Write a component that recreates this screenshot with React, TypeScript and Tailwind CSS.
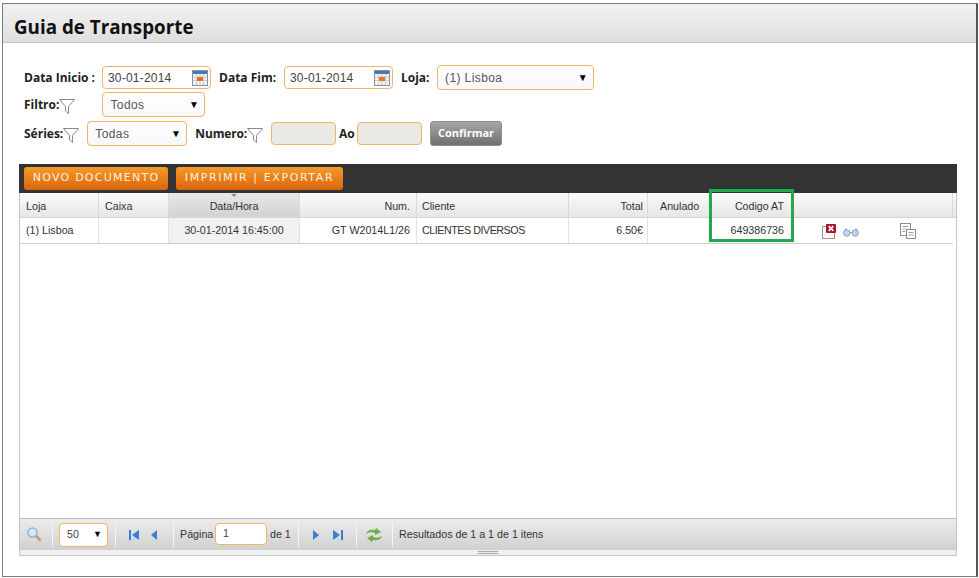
import React from "react";

const labelCls = "font-['Open_Sans',sans-serif] font-bold text-[12px] text-[#222] leading-none";
const fieldCls = "border border-[#eeb564] rounded-[4px] bg-white font-['Liberation_Sans',sans-serif] text-[12px] text-[#444]";

function Funnel({ className = "" }: { className?: string }) {
  return (
    <svg width="16" height="17" viewBox="0 0 16 17" className={className}>
      <path d="M0.5 1.5H15.5L9.5 8.5V15.5L6.5 13V8.5Z" fill="#fff" stroke="#8a8a8a" strokeWidth="1" />
    </svg>
  );
}

function Calendar() {
  return (
    <svg width="16" height="16" viewBox="0 0 16 16">
      <rect x="0.5" y="0.5" width="15" height="15" fill="#f2f2ee" stroke="#7f94a8" />
      <rect x="1" y="1" width="14" height="3" fill="#4a78ad" />
      <path d="M1 7H15M1 10.500H15M4.500 4V15M8 4V15M11.500 4V15" stroke="#c9cfd4" strokeWidth="1" />
      <rect x="5" y="7" width="6" height="4" fill="#e07b1a" />
    </svg>
  );
}

function Select({ text, widthCls, heightCls }: { text: string; widthCls: string; heightCls: string }) {
  return (
    <div className={`${fieldCls} ${widthCls} ${heightCls} flex items-center justify-between pl-[7px] pr-[5px] bg-gradient-to-b from-white to-[#f8f8fa] tracking-[0.4px]`}>
      <span className="text-[#555]">{text}</span>
      <span className="text-[10px] text-black leading-none">▼</span>
    </div>
  );
}

function DateInput({ value }: { value: string }) {
  return (
    <div className={`${fieldCls} w-[109px] h-[23px] flex items-center justify-between pl-[5px] pr-[2px]`}>
      <span className="tracking-[0.2px]">{value}</span>
      <Calendar />
    </div>
  );
}

function OrangeButton({ text, cls }: { text: string; cls: string }) {
  return (
    <div className={`${cls} h-[23px] rounded-[3px] bg-gradient-to-b from-[#f59a2a] to-[#d9640a] flex items-center justify-center font-['DejaVu_Sans',sans-serif] text-[11px] text-[#fff0da]`}>
      {text}
    </div>
  );
}

const columns = [
  { title: "Loja", cell: "(1) Lisboa", w: "w-[79px]", align: "text-left pl-[6px]", cellCls: "" },
  { title: "Caixa", cell: "", w: "w-[70px]", align: "text-left pl-[6px]", cellCls: "" },
  { title: "Data/Hora", cell: "30-01-2014 16:45:00", w: "w-[131px]", align: "text-center", sorted: true, cellCls: "" },
  { title: "Num.", cell: "GT W2014L1/26", w: "w-[117px]", align: "text-right pr-[6px]", cellCls: "" },
  { title: "Cliente", cell: "CLIENTES DIVERSOS", w: "w-[152px]", align: "text-left pl-[5px]", cellCls: "tracking-[-0.45px]" },
  { title: "Total", cell: "6.50€", w: "w-[79px]", align: "text-right pr-[4px]", cellCls: "" },
  { title: "Anulado", cell: "", w: "w-[63px]", align: "text-left pl-[12px]", cellCls: "" },
  { title: "Codigo AT", cell: "649386736", w: "w-[82px]", align: "text-right pr-[8px]", cellCls: "" },
];

function RowIcons() {
  return (
    <div className="flex-1 flex items-center pl-[29px] h-full">
      <svg width="15" height="15" viewBox="0 0 15 15" className="mt-[1px]">
        <rect x="0.500" y="2.500" width="12" height="12" fill="none" stroke="#5f1a1a" strokeWidth="1" strokeDasharray="1 1" />
        <rect x="4" y="0" width="10" height="9" rx="1" fill="#a8122a" />
        <path d="M6.700 2.200L11.300 6.800M11.300 2.200L6.700 6.800" stroke="#fff" strokeWidth="1.800" />
      </svg>
      <svg width="16" height="10" viewBox="0 0 16 10" className="ml-[6px] mt-[2px]">
        <circle cx="3.800" cy="6" r="3.200" fill="#c3d7ea" stroke="#7fa3c7" />
        <circle cx="12.200" cy="6" r="3.200" fill="#c3d7ea" stroke="#7fa3c7" />
        <path d="M7 5.500H9M1.500 3.500L3.500 1M14.500 3.500L12.500 1" stroke="#7fa3c7" fill="none" />
      </svg>
      <svg width="16" height="16" viewBox="0 0 16 16" className="ml-[41px] mt-[1px]">
        <rect x="0.500" y="0.500" width="10" height="12" fill="#fff" stroke="#8c8c8c" />
        <rect x="6.500" y="6.500" width="9" height="9" fill="#fff" stroke="#8c8c8c" />
        <path d="M2.500 3.500H8.500M2.500 6H5.500M2.500 8.500H5.500M8.500 9.500H13.500M8.500 12H13.500" stroke="#a0a0a0" />
      </svg>
    </div>
  );
}

function Sep() {
  return <div className="w-[1px] h-[24px] bg-[#f4f4f4] shrink-0" />;
}

export default function App() {
  return (
    <div className="w-[979px] h-[578px] bg-white pt-[3px] pl-[2px] pr-[1px] pb-[1px] overflow-hidden">
      <div className="relative h-full border border-[#7d7d7d] border-r-2 border-r-[#555]">
        <header className="h-[39px] bg-gradient-to-b from-[#f2f2f2] to-[#dfdfdf] border-b border-[#c8c8c8] pl-[11px] flex items-center">
          <h1 className="font-['Open_Sans',sans-serif] font-bold text-[18.8px] text-[#111] leading-none mt-[8px]">Guia de Transporte</h1>
        </header>

        <section className="pl-[21px] pt-[22px]">
          <div className="flex items-center h-[25px]">
            <span className={`${labelCls} w-[78px]`}>Data Inicio :</span>
            <DateInput value="30-01-2014" />
            <span className={`${labelCls} ml-[8px] w-[65px]`}>Data Fim:</span>
            <DateInput value="30-01-2014" />
            <span className={`${labelCls} ml-[8px] w-[36px]`}>Loja:</span>
            <Select text="(1) Lisboa" widthCls="w-[157px]" heightCls="h-[25px]" />
          </div>
          <div className="flex items-center h-[25px] mt-[2px]">
            <span className={labelCls}>Filtro:</span>
            <Funnel className="mt-[3px]" />
            <div className="ml-[27px]">
              <Select text="Todos" widthCls="w-[103px]" heightCls="h-[25px]" />
            </div>
          </div>
          <div className="flex items-center h-[25px] mt-[4px]">
            <span className={labelCls}>Séries:</span>
            <Funnel className="mt-[3px]" />
            <div className="ml-[8px]">
              <Select text="Todas" widthCls="w-[100px]" heightCls="h-[25px]" />
            </div>
            <span className={`${labelCls} ml-[8px] tracking-[-0.15px]`}>Numero:</span>
            <Funnel className="mt-[3px]" />
            <div className={`${fieldCls} ml-[8px] w-[65px] h-[23px] !bg-[#ebe9e3]`} />
            <span className={`${labelCls} ml-[3px] w-[18px]`}>Ao</span>
            <div className={`${fieldCls} w-[65px] h-[23px] !bg-[#ebe9e3]`} />
            <div className="ml-[8px] w-[72px] h-[25px] rounded-[3px] border border-[#8d8d8d] bg-gradient-to-b from-[#a6a6a6] to-[#6f6f6f] flex items-center justify-center font-['Open_Sans',sans-serif] font-bold text-[11px] text-white">
              Confirmar
            </div>
          </div>
        </section>

        <section className="relative mt-[18px] ml-[16px] w-[938px] h-[392px] border-x border-b border-[#c6c6c6] flex flex-col font-['Liberation_Sans',sans-serif] text-[10.7px] text-[#333]">
          <div className="h-[29px] bg-[#333333] flex items-end gap-[8px] pl-[5px] pb-[3px] shrink-0 -mx-[1px]">
            <OrangeButton text="NOVO DOCUMENTO" cls="w-[144px] tracking-[1.25px]" />
            <OrangeButton text="IMPRIMIR | EXPORTAR" cls="w-[167px] tracking-[1.6px]" />
          </div>

          <div className="flex h-[25px] shrink-0 bg-gradient-to-b from-[#fbfbfb] to-[#e6e6e6] border-b border-[#d4d4d4]">
            {columns.map((c) => (
              <div
                key={c.title}
                className={`${c.w} ${c.align} relative leading-[26px] border-r border-[#dadada] ${c.sorted ? "bg-gradient-to-b from-[#e8e8e8] to-[#d2d2d2]" : ""}`}
              >
                {c.sorted && (
                  <span className="absolute left-1/2 -translate-x-1/2 top-[1px] w-0 h-0 border-x-[3px] border-x-transparent border-t-[3px] border-t-[#888]" />
                )}
                {c.title}
              </div>
            ))}
            <div className="flex-1 mr-[3px] border-r border-[#dadada]" />
          </div>

          <div className="flex h-[26px] shrink-0 mr-[3px] border-b border-[#cfcfcf]">
            {columns.map((c) => (
              <div
                key={c.title}
                className={`${c.w} ${c.align} ${c.cellCls} leading-[25px] border-r border-[#e2e2e2] ${c.sorted ? "bg-[#f1f1f1]" : ""}`}
              >
                {c.cell}
              </div>
            ))}
            <RowIcons />
          </div>

          <div className="flex-1" />

          <div className="h-[32px] shrink-0 bg-gradient-to-b from-[#ececec] to-[#d0d0d0] border-t border-[#bdbdbd] flex items-center pl-[6px] text-[#333]">
            <svg width="16" height="16" viewBox="0 0 16 16" className="mb-[2px]">
              <circle cx="6.500" cy="6.500" r="4.500" fill="#d5e6f5" stroke="#8fb6d8" strokeWidth="1.500" />
              <path d="M10 10L14.500 14.500" stroke="#c49a5a" strokeWidth="2.500" />
            </svg>
            <div className="w-[10px] shrink-0" />
            <Sep />
            <div className="ml-[6px]">
              <div className={`${fieldCls} w-[49px] h-[24px] flex items-center justify-between pl-[7px] pr-[5px]`}>
                <span className="text-[10.7px]">50</span>
                <span className="text-[9px] text-black">▼</span>
              </div>
            </div>
            <div className="ml-[7px]"><Sep /></div>
            <svg width="12" height="12" viewBox="0 0 12 12" className="ml-[12px]">
              <path d="M1 1H3V11H1ZM11 1V11L4 6Z" fill="#3a7fd0" />
            </svg>
            <svg width="8" height="12" viewBox="0 0 8 12" className="ml-[10px]">
              <path d="M7 1V11L1 6Z" fill="#3a7fd0" />
            </svg>
            <div className="ml-[15px]"><Sep /></div>
            <span className="ml-[6px] w-[33px] shrink-0 whitespace-nowrap">Página</span>
            <div className={`${fieldCls} ml-[2px] w-[52px] h-[22px] pl-[7px] leading-[19px] !text-[10.7px] mb-[1px]`}>1</div>
            <span className="ml-[3px] w-[20px] shrink-0 whitespace-nowrap">de 1</span>
            <div className="ml-[8px]"><Sep /></div>
            <svg width="8" height="12" viewBox="0 0 8 12" className="ml-[13px]">
              <path d="M1 1V11L7 6Z" fill="#3a7fd0" />
            </svg>
            <svg width="12" height="12" viewBox="0 0 12 12" className="ml-[12px]">
              <path d="M1 1V11L8 6ZM9 1H11V11H9Z" fill="#3a7fd0" />
            </svg>
            <div className="ml-[12px]"><Sep /></div>
            <svg width="18" height="16" viewBox="0 0 18 16" className="ml-[8px]">
              <path d="M1 7C2 3 6 2 10 3L11 1L16 5L10 8L10 6C7 5 4 5 1 7Z" fill="#6cb04c" />
              <path d="M17 9C16 13 12 14 8 13L7 15L2 11L8 8L8 10C11 11 14 11 17 9Z" fill="#6cb04c" />
            </svg>
            <div className="ml-[9px]"><Sep /></div>
            <span className="ml-[6px]">Resultados de 1 a 1 de 1 itens</span>
          </div>

          <div className="h-[5px] shrink-0 bg-[#f0f0f0] flex justify-center items-center">
            <div className="w-[20px] h-[3px] border-y border-[#a8a8a8]" />
          </div>

          <div className="absolute left-[689px] top-[25px] w-[85px] h-[53px] border-[3px] border-[#22a84f]" />
        </section>
      </div>
    </div>
  );
}
